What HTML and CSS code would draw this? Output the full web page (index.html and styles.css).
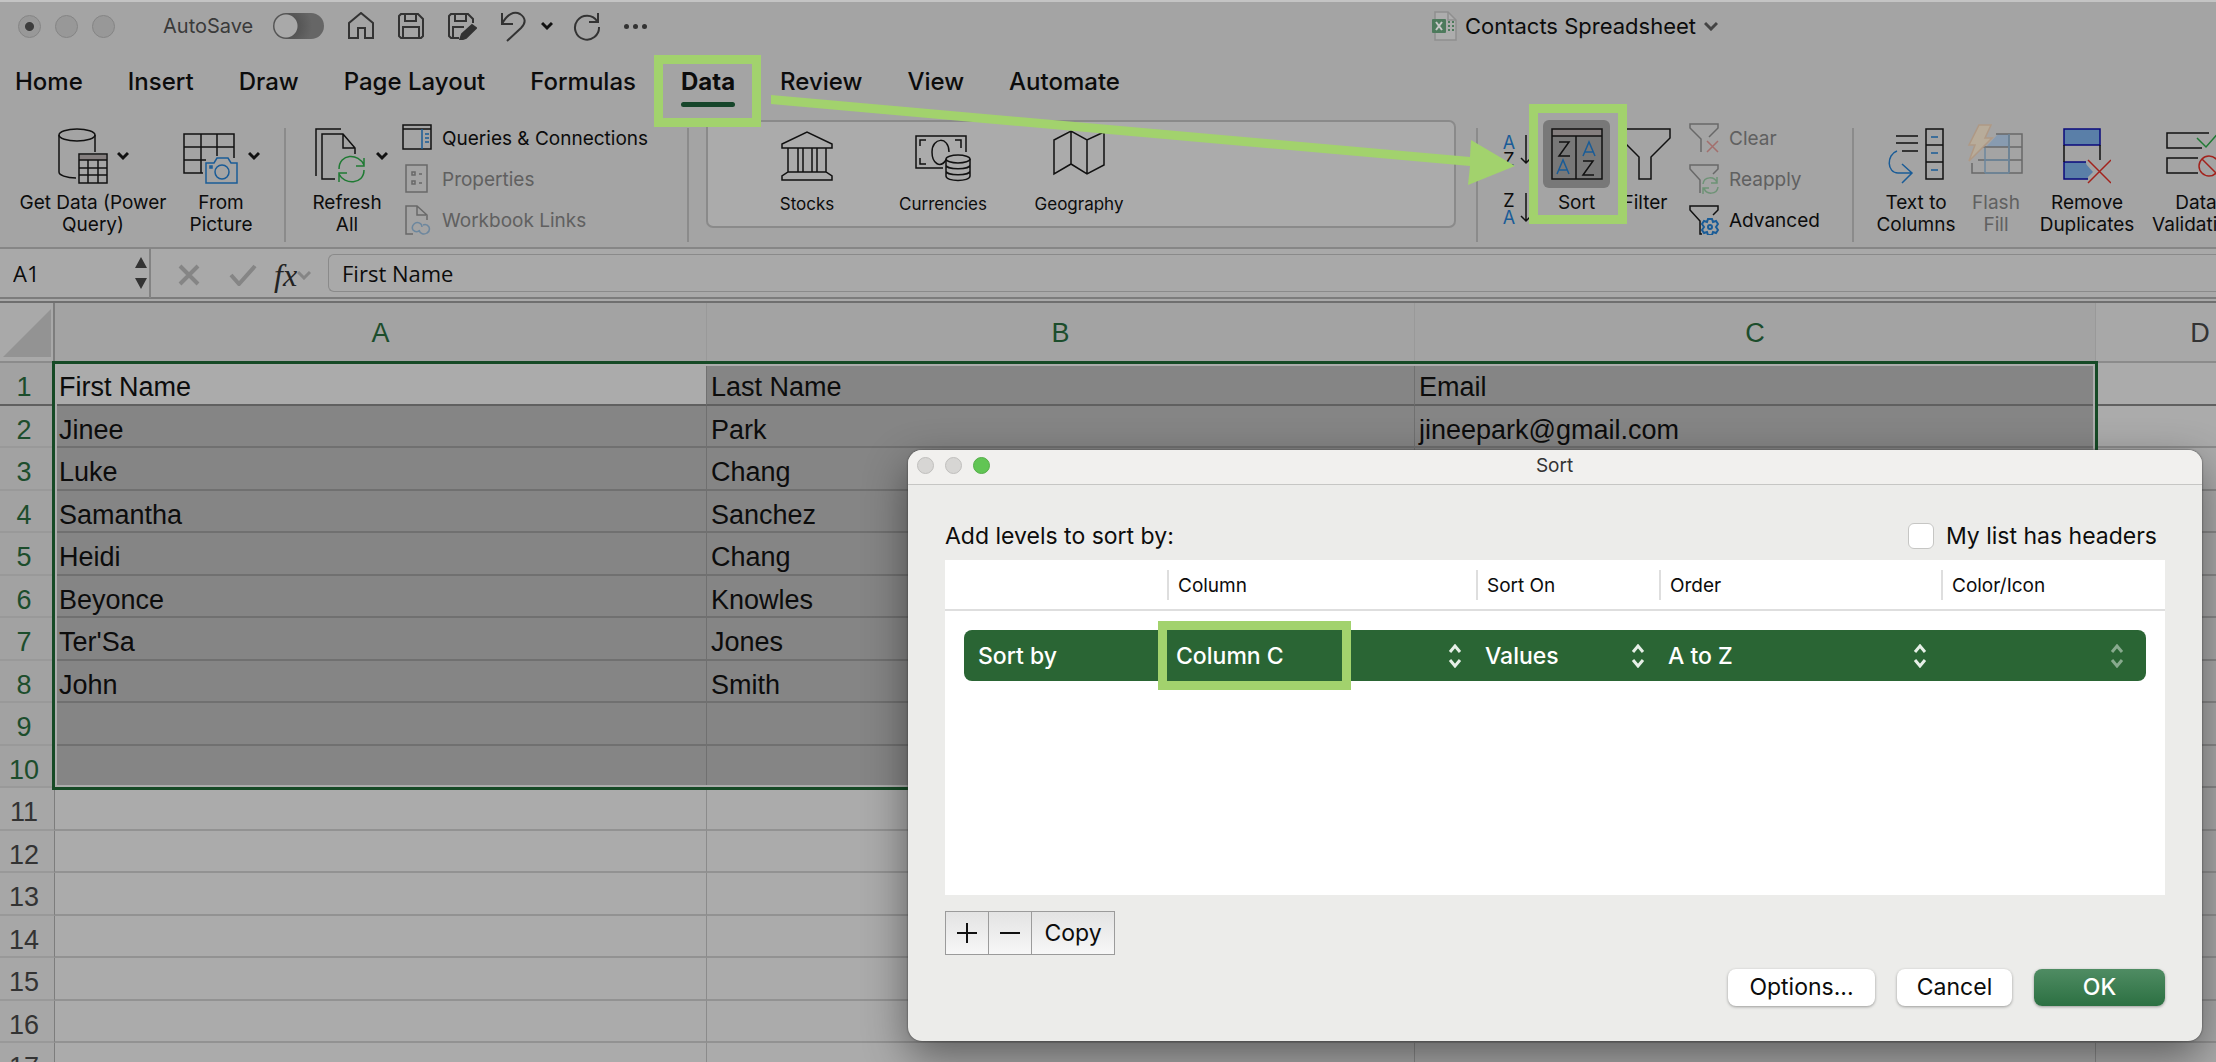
FILE: index.html
```html
<!DOCTYPE html>
<html lang="en">
<head>
    <meta charset="UTF-8">
    <meta name="viewport" content="width=device-width, initial-scale=1.0">
    <title>Contacts Spreadsheet</title>
    <link rel="stylesheet" href="styles.css">
</head>
<body>
    <header class="titlebar">
        <div class="lights">
            <span class="light dot"></span>
            <span class="light"></span>
            <span class="light"></span>
        </div>
        <label class="autosave">AutoSave <input type="checkbox" class="switch"></label>
        <div class="quick">
            <button aria-label="Home"><svg width="28" height="28" viewBox="0 0 28 28"><path d="M2 26V11L14 1l12 10v15h-8v-10h-7v10z"/></svg></button>
            <button aria-label="Save"><svg width="28" height="28" viewBox="0 0 28 28"><path d="M4 2h17l5 5v17l-2 2H4l-2-2V4zM8 2v7h11V2M6 26V15h16v11"/></svg></button>
            <button aria-label="Save as"><svg width="30" height="28" viewBox="0 0 30 28"><path d="M12 26H4l-2-2V4l2-2h17l5 5v4M8 2v7h11V2M6 26V15h11"/><path class="pen" d="M25 13l4 3-10 10-6 2 2-6z"/></svg></button>
            <button class="undo" aria-label="Undo"><svg width="28" height="32" viewBox="0 0 28 32"><path d="M3 3v11h11M3 14C8 4 15 1 21 4c6 4 6 9 1 14L8 31"/></svg></button>
            <button class="more" aria-label="Undo list"><svg class="chev" width="12" height="10" viewBox="0 0 12 10"><path d="M1 2l5 5 5-5"/></svg></button>
            <button aria-label="Redo"><svg width="30" height="30" viewBox="0 0 30 30"><path d="M26 2v9h-9M25 10A12 12 0 1 0 27 16"/></svg></button>
            <button class="dots" aria-label="More"><i></i><i></i><i></i></button>
        </div>
        <div class="doc">
            <svg width="26" height="30" viewBox="0 0 26 30"><path d="M4 1h13l8 8v20H4z" fill="#adadad" stroke="#8f8f8f"/><path d="M17 1v8h8" fill="none" stroke="#8f8f8f"/><rect x="1" y="8" width="14" height="14" rx="1" fill="#4d7a5c" stroke="none"/><path d="M5 11l6 8M11 11l-6 8" stroke="#c8c8c8" stroke-width="2"/><path d="M17 11h2M21 11h2M17 15h2M21 15h2M17 19h2M21 19h2" stroke="#4d7a5c" stroke-width="2"/></svg>
            <span>Contacts Spreadsheet</span>
            <svg class="chev soft" width="14" height="10" viewBox="0 0 14 10"><path d="M1 2l6 6 6-6"/></svg>
        </div>
    </header>

    <nav class="tabs">
        <a href="#">Home</a>
        <a href="#">Insert</a>
        <a href="#">Draw</a>
        <a href="#">Page Layout</a>
        <a href="#">Formulas</a>
        <a href="#" class="active">Data<span class="mark"></span></a>
        <a href="#">Review</a>
        <a href="#">View</a>
        <a href="#">Automate</a>
    </nav>

    <section class="ribbon">
        <div class="group get">
            <button class="big w-data">
                <span class="pic">
                    <svg width="50" height="56" viewBox="0 0 50 56"><ellipse cx="19" cy="7" rx="18" ry="6"/><path d="M1 7v37c0 3 7 6 17 6M37 7v17"/><path d="M21 26h28v29H21z"/><path class="fillgray" d="M22 27h26v5H22z"/><path d="M21 32h28M21 40h28M21 47h28M30 32v23M40 32v23"/></svg>
                    <svg class="chev" width="12" height="10" viewBox="0 0 12 10"><path d="M1 2l5 5 5-5"/></svg>
                </span>
                Get Data (Power<br>Query)
            </button>
            <button class="big w-pic">
                <span class="pic">
                    <svg width="56" height="56" viewBox="0 0 56 56"><path d="M20 45H1V6h50v24M1 19h50M1 32h22M18 6v39M34 6v22"/><path class="blue" d="M23 35h8l3-5h11l3 5h6v20H23z"/><circle class="blue" cx="39" cy="44" r="7"/><path class="blue" d="M27 38h2v2h-2z"/></svg>
                    <svg class="chev" width="12" height="10" viewBox="0 0 12 10"><path d="M1 2l5 5 5-5"/></svg>
                </span>
                From<br>Picture
            </button>
        </div>
        <div class="group refresh">
            <button class="big w-ref">
                <span class="pic">
                    <svg width="52" height="56" viewBox="0 0 52 56"><path d="M1 48V1h25M20 51H7V6h21l12 14v6M28 6v14h12"/><path class="green" d="M24 41c0-16 20-16 25-4M49 30v8h-8M49 42c0 15-20 15-25 4M24 54v-9h8"/></svg>
                    <svg class="chev" width="12" height="10" viewBox="0 0 12 10"><path d="M1 2l5 5 5-5"/></svg>
                </span>
                Refresh<br>All
            </button>
            <div class="list">
                <button><svg width="30" height="30" viewBox="0 0 30 30"><path d="M1 2h28v24H1zM1 6h28"/><path class="blue" d="M20 6v20M23 11h4M23 15h4M23 19h4"/></svg>Queries &amp; Connections</button>
                <button disabled><svg width="30" height="30" viewBox="0 0 30 30"><path d="M4 1h21v27H4zM10 8h3v3h-3zM10 17h3v3h-3zM17 10h3M17 19h3"/></svg>Properties</button>
                <button disabled><svg width="30" height="30" viewBox="0 0 30 30"><path d="M11 29H4V1h11l10 9v5M15 1v9h9"/><path class="blue" d="M17 26a5 5 0 0 1-6-1 5 5 0 0 1 1-6c3-3 8-1 8 3M21 20a5 5 0 0 1 6 2 5 5 0 0 1-2 6c-3 2-7 1-8-3"/></svg>Workbook Links</button>
            </div>
        </div>
        <div class="group types">
            <div class="gallery">
                <button><svg width="56" height="52" viewBox="0 0 56 52"><path d="M3 18v-4L28 2l25 12v4zM9 18v24M19 18v24M24 18v24M33 18v24M38 18v24M47 18v24M9 42h38l6 4v4H3v-4z"/></svg>Stocks</button>
                <button><svg width="56" height="52" viewBox="0 0 56 52"><path d="M28 38H1V6h50v16M11 10H5v6M5 28v6h6M40 10h6v8M31 30c-6 9-14 3-14-8 0-15 17-16 17 0"/><ellipse cx="43" cy="29" rx="12" ry="4"/><path d="M31 29v17c0 6 24 6 24 0V29M31 35c0 5 24 5 24 0M31 41c0 5 24 5 24 0"/></svg>Currencies</button>
                <button><svg width="56" height="52" viewBox="0 0 56 52"><path d="M3 10L20 1l16 9 17-8v33l-17 9-16-10L3 44zM20 1v33M36 10v34"/></svg>Geography</button>
            </div>
        </div>
        <div class="group sorting">
            <div class="az">
                <button aria-label="Sort A to Z"><span><b>A</b>Z</span><svg width="12" height="32" viewBox="0 0 12 32"><path d="M6 1v28M1 24l5 5 5-5"/></svg></button>
                <button aria-label="Sort Z to A"><span>Z<b>A</b></span><svg width="12" height="32" viewBox="0 0 12 32"><path d="M6 1v28M1 24l5 5 5-5"/></svg></button>
            </div>
            <button class="big w-sort">
                <span class="pic pressed"><svg width="52" height="52" viewBox="0 0 52 52"><path class="fillgray" d="M1 1h50v7H1z"/><path d="M1 1h50v50H1zM1 8h50M25 8v43M8 14h10L8 28h11M32 33h10L32 47h11"/><path class="blue" d="M6 46l6-14 6 14M8 42h8M32 28l6-14 6 14M34 24h8"/></svg></span>
                Sort
                <span class="mark"></span>
            </button>
            <button class="big w-filter">
                <span class="pic"><svg width="52" height="52" viewBox="0 0 52 52"><path d="M1 1h50v9L32 29v22H20V29L1 10z"/></svg></span>
                Filter
            </button>
            <div class="list filters">
                <button disabled><svg width="30" height="30" viewBox="0 0 30 30"><path d="M12 29V16L1 5V1h28v4l-9 9"/><path class="red" d="M18 18l11 11M29 18L18 29"/></svg>Clear</button>
                <button disabled><svg width="30" height="30" viewBox="0 0 30 30"><path d="M11 29V16L1 5V1h28v4l-5 5"/><path class="green" d="M14 20c1-8 12-8 14-1M28 13v6h-6M29 23c-1 8-12 8-14 1M14 30v-6h6"/></svg>Reapply</button>
                <button><svg width="30" height="30" viewBox="0 0 30 30"><path d="M13 29h-2V16L1 5V1h28v4l-5 5"/><path class="blue gear" d="M19 14h4l1 3 3-1 2 3-2 3 2 3-2 3-3-1-1 3h-4l-1-3-3 1-2-3 2-3-2-3 2-3 3 1z"/><circle class="blue gear" cx="21" cy="22" r="2"/></svg>Advanced</button>
            </div>
        </div>
        <div class="group tools">
            <button class="big w-text">
                <span class="pic"><svg width="56" height="56" viewBox="0 0 56 56"><path d="M8 8h22M8 15h22M14 23h16M38 1h17v50H38zM38 17h17M38 34h17"/><path class="blue" d="M43 9h7M43 25h7M43 42h7M9 23C-2 27-1 45 10 45h13M14 36l10 9-10 10"/></svg></span>
                Text to<br>Columns
            </button>
            <button class="big w-flash" disabled>
                <span class="pic"><svg width="56" height="56" viewBox="0 0 56 56"><path fill="#5f8fc4" stroke="none" d="M30 6h11v13H18z"/><path d="M28 6h26v39H4V35M14 19h40M10 32h44M41 6v39"/><path class="blue" d="M17 20v25M41 6v39M17 32h24M17 45h24"/><path fill="#d8b98c" stroke="#c08a58" d="M11-3h12l-6 13h7L1 33l6-16H1z"/></svg></span>
                Flash<br>Fill
            </button>
            <button class="big w-remove">
                <span class="pic"><svg width="48" height="56" viewBox="0 0 48 56"><path fill="#5a7fa8" stroke="#0a0a7c" d="M1 1h36v16H1zM25 51H1V34h22"/><path fill="#5a7fa8" stroke="none" d="M22 35l8 9-6 6z"/><path d="M1 17v17M37 17v15"/><path class="red" d="M25 32l23 23M48 32L25 55"/></svg></span>
                Remove<br>Duplicates
            </button>
            <button class="big w-valid">
                <span class="pic"><svg width="60" height="56" viewBox="0 0 60 56"><path d="M43 5H1v15h35M32 45H1V30h31"/><path class="green" d="M31 10l9 9L55 2"/><circle class="red" cx="43" cy="38" r="10"/><path class="red" d="M36 31l14 14"/></svg></span>
                Data<br>Validation
            </button>
        </div>
    </section>

    <section class="formulabar">
        <div class="namebox">
            <input type="text" value="A1" aria-label="Name box">
            <svg width="14" height="34" viewBox="0 0 14 34"><path d="M7 1l6 11H1zM7 33l6-11H1z"/></svg>
        </div>
        <div class="fx">
            <svg width="22" height="22" viewBox="0 0 22 22"><path d="M2 2l18 18M20 2L2 20"/></svg>
            <svg width="28" height="22" viewBox="0 0 28 22"><path d="M2 11l8 9L26 2"/></svg>
            <em>fx</em>
            <svg class="thin" width="14" height="10" viewBox="0 0 14 10"><path d="M1 2l6 6 6-6"/></svg>
        </div>
        <input type="text" class="formula" value="First Name" aria-label="Formula">
    </section>

    <main class="sheet">
        <table>
            <colgroup><col class="c-num"><col class="c-a"><col class="c-b"><col class="c-c"><col class="c-d"></colgroup>
            <thead>
                <tr><th class="corner"><svg width="48" height="48" viewBox="0 0 48 48"><path d="M48 0v48H0z"/></svg></th><th>A</th><th>B</th><th>C</th><th class="off">D</th></tr>
            </thead>
            <tbody>
                <tr class="sel first"><th>1</th><td class="current">First Name</td><td>Last Name</td><td>Email</td><td></td></tr>
                <tr class="sel"><th>2</th><td>Jinee</td><td>Park</td><td>jineepark@gmail.com</td><td></td></tr>
                <tr class="sel"><th>3</th><td>Luke</td><td>Chang</td><td></td><td></td></tr>
                <tr class="sel"><th>4</th><td>Samantha</td><td>Sanchez</td><td></td><td></td></tr>
                <tr class="sel"><th>5</th><td>Heidi</td><td>Chang</td><td></td><td></td></tr>
                <tr class="sel"><th>6</th><td>Beyonce</td><td>Knowles</td><td></td><td></td></tr>
                <tr class="sel"><th>7</th><td>Ter'Sa</td><td>Jones</td><td></td><td></td></tr>
                <tr class="sel"><th>8</th><td>John</td><td>Smith</td><td></td><td></td></tr>
                <tr class="sel"><th>9</th><td></td><td></td><td></td><td></td></tr>
                <tr class="sel"><th>10</th><td></td><td></td><td></td><td></td></tr>
                <tr><th>11</th><td></td><td></td><td></td><td></td></tr>
                <tr><th>12</th><td></td><td></td><td></td><td></td></tr>
                <tr><th>13</th><td></td><td></td><td></td><td></td></tr>
                <tr><th>14</th><td></td><td></td><td></td><td></td></tr>
                <tr><th>15</th><td></td><td></td><td></td><td></td></tr>
                <tr><th>16</th><td></td><td></td><td></td><td></td></tr>
                <tr><th>17</th><td></td><td></td><td></td><td></td></tr>
            </tbody>
        </table>
        <div class="selection"></div>
    </main>

    <!-- arrow from the Data tab to the Sort button -->
    <svg class="arrow" width="746" height="92" viewBox="0 0 746 92"><path d="M1 2L700 64l1-17 44 26-47 19 2-19L1 11z"/></svg>

    <div class="dialog" role="dialog" aria-label="Sort">
        <div class="dialog-title">
            <span class="light"></span>
            <span class="light"></span>
            <span class="light on"></span>
            <h1>Sort</h1>
        </div>
        <div class="dialog-body">
            <div class="intro">
                <p>Add levels to sort by:</p>
                <label><input type="checkbox"> My list has headers</label>
            </div>
            <div class="levels">
                <div class="level-head">
                    <span></span>
                    <span>Column</span>
                    <span>Sort On</span>
                    <span>Order</span>
                    <span>Color/Icon</span>
                </div>
                <div class="level">
                    <span>Sort by</span>
                    <div class="pick">
                        <select aria-label="Column"><option>Column C</option></select>
                        <svg width="14" height="24" viewBox="0 0 14 24"><path d="M2 8l5-6 5 6M2 16l5 6 5-6"/></svg>
                        <span class="mark"></span>
                    </div>
                    <div class="pick">
                        <select aria-label="Sort on"><option>Values</option></select>
                        <svg width="14" height="24" viewBox="0 0 14 24"><path d="M2 8l5-6 5 6M2 16l5 6 5-6"/></svg>
                    </div>
                    <div class="pick">
                        <select aria-label="Order"><option>A to Z</option></select>
                        <svg width="14" height="24" viewBox="0 0 14 24"><path d="M2 8l5-6 5 6M2 16l5 6 5-6"/></svg>
                    </div>
                    <div class="pick empty">
                        <select aria-label="Color or icon" disabled><option></option></select>
                        <svg width="14" height="24" viewBox="0 0 14 24"><path d="M2 8l5-6 5 6M2 16l5 6 5-6"/></svg>
                    </div>
                </div>
            </div>
            <div class="edit">
                <button aria-label="Add"><svg width="20" height="20" viewBox="0 0 20 20"><path d="M10 0v20M0 10h20"/></svg></button>
                <button aria-label="Remove"><svg width="20" height="20" viewBox="0 0 20 20"><path d="M0 10h20"/></svg></button>
                <button class="copy">Copy</button>
            </div>
            <div class="actions">
                <button class="options">Options...</button>
                <button class="cancel">Cancel</button>
                <button class="ok">OK</button>
            </div>
        </div>
    </div>
</body>
</html>
```
FILE: styles.css
```css
*{
    margin: 0;
    padding: 0;
    box-sizing: border-box;
}
body{
    position: relative;
    height: 100vh;
    overflow: hidden;
    background: #a4a4a4;
    color: #0c0c0c;
    font-family: Inter, "Liberation Sans", sans-serif;
    font-size: 19px;
}
button, input, select{
    font: inherit;
    color: inherit;
    background: none;
    border: none;
}
a{
    color: inherit;
    text-decoration: none;
}
svg{
    display: block;
    flex: none;
    fill: none;
    stroke: #111;
    stroke-width: 1.5;
}
.blue{ stroke: #1a5c97; }
.green{ stroke: #1f7a33; }
.red{ stroke: #a3221c; }
.gear{ stroke-width: 2; }
.fillgray{
    fill: #857f7f;
    stroke: none;
}
.chev{ stroke-width: 3; }
.soft{ stroke: #444; }
.mark{
    position: absolute;
    border: 9px solid #a2d26d;
    z-index: 2;
}

/* title bar */
.titlebar{
    display: flex;
    align-items: center;
    height: 52px;
    padding: 0 0 2px 18px;
    border-top: 2px solid #c4c4c4;
    color: #3a3a3a;
}
.lights{
    display: flex;
    gap: 14px;
}
.light{
    width: 23px;
    height: 23px;
    border-radius: 50%;
    background: #989898;
    border: 1px solid #858585;
}
.dot{
    background: radial-gradient(circle, #3d3d3d 4px, #989898 5px);
}
.autosave{
    display: flex;
    align-items: center;
    gap: 20px;
    margin-left: 48px;
    font-size: 20px;
}
.switch{
    appearance: none;
    width: 51px;
    height: 26px;
    border-radius: 13px;
    background: radial-gradient(circle at 13px 13px, #a9a9a9 11px, #555 12px, #666 26px);
}
.quick{
    display: flex;
    align-items: center;
    gap: 22px;
    margin-left: 23px;
}
.quick svg{
    stroke: #333;
    stroke-width: 2;
}
.quick .pen{ fill: #333; }
.quick .more{ margin: 0 -3px 0 -8px; }
.quick .more svg{
    stroke: #111;
    stroke-width: 3;
}
.dots{
    display: flex;
    gap: 4px;
}
.dots i{
    width: 5px;
    height: 5px;
    border-radius: 50%;
    background: #333;
}
.doc{
    display: flex;
    align-items: center;
    gap: 8px;
    margin-left: auto;
    margin-right: 498px;
    color: #0c0c0c;
    font-size: 22px;
}

/* tabs */
.tabs{
    display: flex;
    gap: 45px;
    height: 60px;
    padding-left: 15px;
    font-size: 24px;
    font-weight: 500;
    line-height: 60px;
}
.active{
    position: relative;
    font-weight: 700;
}
.active::after{
    content: "";
    position: absolute;
    left: 0;
    right: 0;
    bottom: 5px;
    height: 5px;
    border-radius: 3px;
    background: #16452a;
}
.active .mark{
    inset: 3px -26px -15px -27px;
}

/* ribbon */
.ribbon{
    display: flex;
    height: 137px;
    border-bottom: 2px solid #868686;
}
.group{
    display: flex;
    flex: none;
    margin-top: 16px;
    height: 114px;
    border-right: 2px solid #8b8b8b;
}
.big{
    position: relative;
    display: flex;
    flex-direction: column;
    align-items: center;
    align-self: flex-start;
    flex: none;
    font-size: 19px;
    line-height: 22px;
    white-space: nowrap;
}
.pic{
    display: flex;
    align-items: center;
    gap: 9px;
    height: 56px;
    margin-bottom: 8px;
}
.big:disabled, .list button:disabled{ color: #606060; }
.big:disabled svg, .list button:disabled svg{ opacity: 0.4; }
.get{
    padding-left: 8px;
    width: 286px;
}
.w-data{ width: 170px; }
.w-pic{ width: 86px; }
.refresh{
    gap: 8px;
    width: 403px;
    padding-left: 14px;
}
.w-ref{ width: 94px; }
.w-ref .pic{ padding-left: 8px; }
.list{
    display: flex;
    flex-direction: column;
    gap: 11px;
    margin-top: -5px;
}
.list button{
    display: flex;
    align-items: center;
    gap: 10px;
    height: 30px;
    white-space: nowrap;
}
.types{
    flex: 1 0 789px;
    padding: 0 20px 0 17px;
}
.gallery{
    display: flex;
    flex: 1;
    height: 108px;
    margin-top: -8px;
    padding-left: 31px;
    background: #ababab;
    border: 2px solid #8a8a8a;
    border-radius: 7px;
}
.gallery button{
    display: flex;
    flex-direction: column;
    align-items: center;
    gap: 12px;
    width: 136px;
    padding-top: 8px;
    font-size: 17px;
}
.sorting{
    width: 376px;
    padding-left: 24px;
}
.az{
    display: flex;
    flex-direction: column;
    gap: 26px;
    width: 41px;
    padding-top: 6px;
}
.az button{
    display: flex;
    gap: 4px;
    height: 32px;
    font-size: 18px;
    line-height: 17px;
}
.az span{
    display: flex;
    flex-direction: column;
    width: 14px;
}
.az b{
    font-weight: 400;
    color: #1a5c97;
}
.w-sort{ width: 67px; }
.pressed{
    justify-content: center;
    width: 67px;
    height: 68px;
    margin: -8px 0 4px;
    border-radius: 6px;
    background: #787878;
}
.w-sort .mark{
    inset: -24px -17px -10px -14px;
}
.w-filter{ width: 70px; }
.w-filter .pic{ align-items: flex-start; }
.filters{ margin-left: 9px; }
.tools{
    gap: 8px;
    padding-left: 22px;
    border: none;
}
.w-text{ width: 80px; }
.w-flash{ width: 64px; }
.w-flash svg{ overflow: visible; }
.w-remove{ width: 102px; }
.w-valid{ width: 100px; }

/* formula bar */
.formulabar{
    display: flex;
    align-items: center;
    height: 54px;
    background: #a9a9a9;
    border-bottom: 2px solid #6f6f6f;
    box-shadow: inset 0 -2px #a9a9a9, inset 0 -4px #7c7c7c;
    font-family: "Open Sans", "Noto Sans", sans-serif;
    font-size: 22px;
}
.namebox{
    display: flex;
    align-items: center;
    justify-content: space-between;
    width: 151px;
    height: 50px;
    margin-bottom: 4px;
    padding: 0 1px 0 13px;
    border-right: 2px solid #838383;
}
.namebox input{ width: 100px; }
.namebox svg{
    fill: #333;
    stroke: none;
}
.fx{
    display: flex;
    align-items: center;
    width: 177px;
    padding-left: 27px;
}
.fx svg{
    margin-right: 29px;
    stroke: #858585;
    stroke-width: 4;
}
.fx svg + svg{ margin-right: 17px; }
.fx .thin{ stroke-width: 3; }
.fx em{
    width: 37px;
    font: italic 32px/40px "Liberation Serif", serif;
    color: #222;
}
.formula{
    flex: 1;
    height: 38px;
    margin-bottom: 4px;
    padding-left: 13px;
    border: 1px solid #8a8a8a;
    border-right: none;
    border-radius: 6px 0 0 6px;
}

/* sheet */
.sheet{
    position: relative;
    font: 27px/30px "Liberation Sans", Arial, sans-serif;
}
table{
    width: 2305px;
    table-layout: fixed;
    border-collapse: separate;
    border-spacing: 0;
}
.c-num{ width: 55px; }
.c-a{ width: 652px; }
.c-b{ width: 708px; }
.c-c{ width: 681px; }
.c-d{ width: 209px; }
thead th{
    height: 60px;
    padding-top: 2px;
    font-weight: 400;
    color: #1c4d2c;
    background: #a3a3a3;
    border-right: 1px solid #999;
    border-bottom: 2px solid #8b8b8b;
}
.corner{
    background: #a9a9a9;
    border-right: 2px solid #7d7d7d;
}
.corner svg{
    margin: 0 auto;
    fill: #939393;
    stroke: none;
}
thead .off{
    color: #333;
    background: #a8a8a8;
}
tbody tr{ height: 42px; }
tbody tr:nth-child(odd){ height: 43px; }
td{
    padding: 7px 0 0 4px;
    background: #ababab;
    border-right: 1px solid #8b8b8b;
    border-bottom: 2px solid #929292;
    white-space: nowrap;
}
tbody th{
    padding: 7px 6px 0 0;
    font-weight: 400;
    color: #333;
    background: #a7a7a7;
    border-right: 1px solid #7d7d7d;
    border-bottom: 2px solid #999;
}
.sel th{
    color: #1c4d2c;
    background: #a2a2a2;
}
.sel td{
    background: #858585;
    border-color: #707070;
}
.sel td:last-child{
    background: #ababab;
    border-color: #8b8b8b;
}
.sel .current{ background: #ababab; }
.sel.first th, .sel.first td{ border-bottom-color: #606060; }
.selection{
    position: absolute;
    top: 58px;
    left: 52px;
    width: 2046px;
    height: 429px;
    border: 3px solid #164a26;
    box-shadow: inset 0 0 0 2px #adadad;
}
.arrow{
    position: absolute;
    top: 93px;
    left: 770px;
    fill: #a2d26d;
    stroke: none;
    z-index: 3;
}

/* sort dialog */
.dialog{
    position: absolute;
    top: 450px;
    left: 908px;
    right: 14px;
    background: #ececea;
    border-radius: 14px;
    box-shadow: 0 0 2px #333, 0 16px 44px rgba(0, 0, 0, 0.45);
    z-index: 4;
}
.dialog-title{
    position: relative;
    display: flex;
    align-items: center;
    gap: 11px;
    height: 35px;
    padding: 0 0 3px 9px;
    background: #f1f0ee;
    border-bottom: 1px solid #c6c6c4;
    border-radius: 14px 14px 0 0;
}
.dialog-title .light{
    width: 17px;
    height: 17px;
    background: #d7d6d4;
    border-color: #c0bfbd;
}
.dialog-title .on{
    background: #61c554;
    border-color: #55ad49;
}
.dialog-title h1{
    flex: 1;
    margin-right: 94px;
    font-size: 19px;
    font-weight: 400;
    color: #333;
    text-align: center;
}
.dialog-body{
    padding: 35px 37px;
    font-size: 23px;
}
.intro{
    display: flex;
    align-items: center;
    justify-content: space-between;
    height: 32px;
    margin-bottom: 8px;
}
.intro label{
    display: flex;
    align-items: center;
    gap: 12px;
    padding-right: 8px;
}
.intro input{
    appearance: none;
    width: 26px;
    height: 26px;
    background: #fff;
    border: 1px solid #c6c6c4;
    border-radius: 6px;
}
.levels{
    min-height: 335px;
    background: #fff;
}
.level-head, .level{
    display: grid;
    grid-template-columns: 222px 309px 183px 282px 1fr;
    align-items: center;
}
.level-head{
    height: 51px;
    border-bottom: 2px solid #dedede;
    font-size: 19px;
}
.level-head span + span{
    height: 30px;
    padding-left: 9px;
    border-left: 2px solid #dedede;
    line-height: 31px;
}
.level{
    grid-template-columns: 203px 309px 183px 282px 1fr;
    height: 51px;
    margin: 19px 19px 0;
    background: #2a6534;
    border-radius: 8px;
    color: #fff;
    font-weight: 500;
}
.level > span{ padding-left: 14px; }
.pick{
    position: relative;
    display: flex;
    align-items: center;
    height: 51px;
}
.pick select{
    appearance: none;
    width: 100%;
    height: 51px;
    padding-left: 9px;
}
.pick svg{
    position: absolute;
    right: 14px;
    stroke: #e6efe7;
    stroke-width: 3;
    pointer-events: none;
}
.empty svg{
    right: 22px;
    opacity: 0.5;
}
.pick .mark{
    top: -9px;
    bottom: -9px;
    left: -9px;
    width: 193px;
    pointer-events: none;
}
.edit{
    display: flex;
    width: 170px;
    height: 44px;
    margin-top: 16px;
    border: 1px solid #9b9b9b;
    background: linear-gradient(#e3e3e3, #f7f7f7);
}
.edit svg{ stroke-width: 2; }
.edit button{
    display: flex;
    align-items: center;
    justify-content: center;
    width: 43px;
    border-right: 1px solid #9b9b9b;
}
.edit .copy{
    flex: 1;
    border: none;
}
.actions{
    display: flex;
    justify-content: flex-end;
    gap: 22px;
    margin-top: 14px;
}
.actions button{
    height: 37px;
    padding-bottom: 2px;
    border-radius: 8px;
    background: #fff;
    box-shadow: 0 1px 3px rgba(0, 0, 0, 0.35);
}
.actions .options{ width: 147px; }
.actions .cancel{ width: 115px; }
.actions .ok{
    width: 131px;
    background: linear-gradient(#4f8c63, #2c7042);
    color: #fff;
    font-weight: 500;
}
```
